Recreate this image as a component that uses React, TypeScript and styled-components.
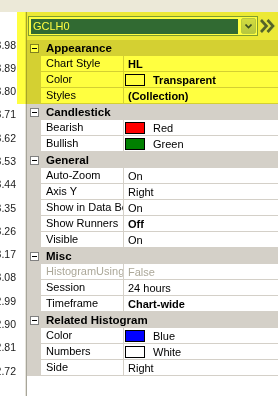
import styled, { createGlobalStyle } from "styled-components";

type Prop = {
  label: string;
  value: string;
  bold?: boolean;
  swatch?: string;
  disabled?: boolean;
};

type Category = {
  title: string;
  props: Prop[];
};

const prices = [
  "3.98", "3.89", "3.80", "3.71", "3.62", "3.53", "3.44", "3.35",
  "3.26", "3.17", "3.08", "2.99", "2.90", "2.81", "2.72",
];

const categories: Category[] = [
  {
    title: "Appearance",
    props: [
      { label: "Chart Style", value: "HL", bold: true },
      { label: "Color", value: "Transparent", bold: true, swatch: "#ffffff" },
      { label: "Styles", value: "(Collection)", bold: true },
    ],
  },
  {
    title: "Candlestick",
    props: [
      { label: "Bearish", value: "Red", swatch: "#ff0000" },
      { label: "Bullish", value: "Green", swatch: "#008000" },
    ],
  },
  {
    title: "General",
    props: [
      { label: "Auto-Zoom", value: "On" },
      { label: "Axis Y", value: "Right" },
      { label: "Show in Data Box", value: "On" },
      { label: "Show Runners", value: "Off", bold: true },
      { label: "Visible", value: "On" },
    ],
  },
  {
    title: "Misc",
    props: [
      { label: "HistogramUsing", value: "False", disabled: true },
      { label: "Session", value: "24 hours" },
      { label: "Timeframe", value: "Chart-wide", bold: true },
    ],
  },
  {
    title: "Related Histogram",
    props: [
      { label: "Color", value: "Blue", swatch: "#0000ff" },
      { label: "Numbers", value: "White", swatch: "#ffffff" },
      { label: "Side", value: "Right" },
    ],
  },
];

const GlobalStyle = createGlobalStyle`
  html, body {
    margin: 0;
    padding: 0;
    background: #ffffff;
  }
  body {
    font-family: "Liberation Sans", Arial, sans-serif;
    font-size: 11px;
    color: #000000;
  }
`;

const Frame = styled.div`
  position: relative;
  width: 278px;
  height: 396px;
  overflow: hidden;
  display: flex;
  flex-direction: column;
  background: #ece9d8;
`;

const TopBand = styled.div`
  height: 12px;
  flex: none;
  background: #ece9d8;
`;

const Body = styled.div`
  flex: 1;
  display: flex;
  min-height: 0;
`;

const Scale = styled.div`
  width: 25px;
  flex: none;
  padding-top: 21px;
  background: #ffffff;
  border-right: 1px solid #e6e4dc;
  overflow: hidden;
`;

const PriceLabel = styled.div`
  height: 23.29px;
  display: flex;
  align-items: center;
  justify-content: flex-end;
  padding-right: 9px;
  white-space: nowrap;
  font-size: 10.5px;
  color: #1a1a1a;
`;

const Panel = styled.div`
  flex: 1;
  display: flex;
  flex-direction: column;
  border-left: 1px solid #a7a59a;
  background: #ffffff;
`;

const PanelHeader = styled.div`
  height: 28px;
  flex: none;
  display: flex;
  align-items: center;
  padding-left: 1px;
  gap: 1px;
  background: #ece9d8;
`;

const Combo = styled.div`
  width: 230px;
  height: 20px;
  box-sizing: border-box;
  display: flex;
  align-items: stretch;
  border: 1px solid #7f9db9;
  background: #ffffff;
`;

const Selected = styled.div`
  flex: 1;
  margin: 2px 2px 1px 2px;
  padding-left: 2px;
  background: #316ac5;
  color: #ffffff;
  font-size: 11px;
  line-height: 14px;
`;

const DropButton = styled.div`
  width: 15px;
  margin: 1px;
  box-sizing: border-box;
  display: flex;
  align-items: center;
  justify-content: center;
  border: 1px solid #b9c9f2;
  border-radius: 2px;
  background: linear-gradient(#d2dcfb, #b7c8f6);
`;

const GridArea = styled.div`
  flex: 1;
  display: flex;
  flex-direction: column;
  background: #ffffff;
`;

const Row = styled.div`
  height: 16px;
  display: flex;
`;

const Gutter = styled.div`
  width: 14px;
  flex: none;
  display: flex;
  align-items: center;
  justify-content: center;
  background: #d4d0c8;
`;

const CategoryRow = styled(Row)`
  background: #d4d0c8;
  align-items: center;
`;

const CategoryTitle = styled.div`
  padding-left: 5px;
  font-weight: bold;
  font-size: 11.5px;
  white-space: nowrap;
  overflow: hidden;
`;

const Expander = styled.div`
  width: 9px;
  height: 9px;
  box-sizing: border-box;
  margin-left: 1px;
  border: 1px solid #808080;
  background: #ffffff;
  display: flex;
  align-items: center;
  justify-content: center;

  &::after {
    content: "";
    width: 5px;
    height: 1px;
    background: #000000;
  }
`;

const LabelCell = styled.div<{ $disabled?: boolean }>`
  width: 83px;
  flex: none;
  box-sizing: border-box;
  padding-left: 5px;
  border-right: 1px solid #d4d0c8;
  border-bottom: 1px solid #d4d0c8;
  line-height: 15px;
  white-space: nowrap;
  overflow: hidden;
  color: ${(p) => (p.$disabled ? "#aca899" : "#000000")};
`;

const ValueCell = styled.div<{ $bold?: boolean; $disabled?: boolean }>`
  flex: 1;
  display: flex;
  align-items: center;
  padding-left: 1px;
  border-bottom: 1px solid #d4d0c8;
  white-space: nowrap;
  overflow: hidden;
  font-weight: ${(p) => (p.$bold ? "bold" : "normal")};
  color: ${(p) => (p.$disabled ? "#aca899" : "#000000")};
`;

const Swatch = styled.div<{ $color: string }>`
  width: 20px;
  height: 12px;
  box-sizing: border-box;
  margin-right: 8px;
  border: 1px solid #000000;
  background: ${(p) => p.$color};
`;

const ValueText = styled.span<{ $pad: boolean }>`
  padding-left: ${(p) => (p.$pad ? "3px" : "0")};
`;

const Filler = styled.div`
  flex: 1;
  background: #ffffff;
`;

// translucent highlight laid over the top of the panel
const Highlight = styled.div`
  position: absolute;
  left: 17px;
  top: 12px;
  width: 261px;
  height: 92px;
  background: #ffff40;
  mix-blend-mode: multiply;
  pointer-events: none;
`;

const chevronDown = (
  <svg width="7" height="5" viewBox="0 0 7 5">
    <path d="M0.5 0.5 L3.5 3.5 L6.5 0.5" fill="none" stroke="#3b4f7a" strokeWidth="1.6" />
  </svg>
);

const doubleChevron = (
  <svg width="18" height="16" viewBox="0 0 18 16">
    <path d="M2 2 L7.5 8 L2 14" fill="none" stroke="#dde2ff" strokeWidth="4.5" />
    <path d="M8.5 2 L14 8 L8.5 14" fill="none" stroke="#dde2ff" strokeWidth="4.5" />
    <path d="M2 2 L7.5 8 L2 14" fill="none" stroke="#56649c" strokeWidth="2.6" />
    <path d="M8.5 2 L14 8 L8.5 14" fill="none" stroke="#56649c" strokeWidth="2.6" />
  </svg>
);

function PropRow({ prop }: { prop: Prop }) {
  return (
    <Row>
      <Gutter />
      <LabelCell $disabled={prop.disabled}>{prop.label}</LabelCell>
      <ValueCell $bold={prop.bold} $disabled={prop.disabled}>
        {prop.swatch ? <Swatch $color={prop.swatch} /> : null}
        <ValueText $pad={!prop.swatch}>{prop.value}</ValueText>
      </ValueCell>
    </Row>
  );
}

export default function App() {
  return (
    <>
      <GlobalStyle />
      <Frame>
        <TopBand />
        <Body>
          <Scale>
            {prices.map((p) => (
              <PriceLabel key={p}>{p}</PriceLabel>
            ))}
          </Scale>
          <Panel>
            <PanelHeader>
              <Combo>
                <Selected>GCLH0</Selected>
                <DropButton>{chevronDown}</DropButton>
              </Combo>
              {doubleChevron}
            </PanelHeader>
            <GridArea>
              {categories.map((cat) => (
                <div key={cat.title}>
                  <CategoryRow>
                    <Gutter>
                      <Expander />
                    </Gutter>
                    <CategoryTitle>{cat.title}</CategoryTitle>
                  </CategoryRow>
                  {cat.props.map((prop) => (
                    <PropRow key={cat.title + prop.label} prop={prop} />
                  ))}
                </div>
              ))}
              <Filler />
            </GridArea>
          </Panel>
        </Body>
        <Highlight />
      </Frame>
    </>
  );
}
